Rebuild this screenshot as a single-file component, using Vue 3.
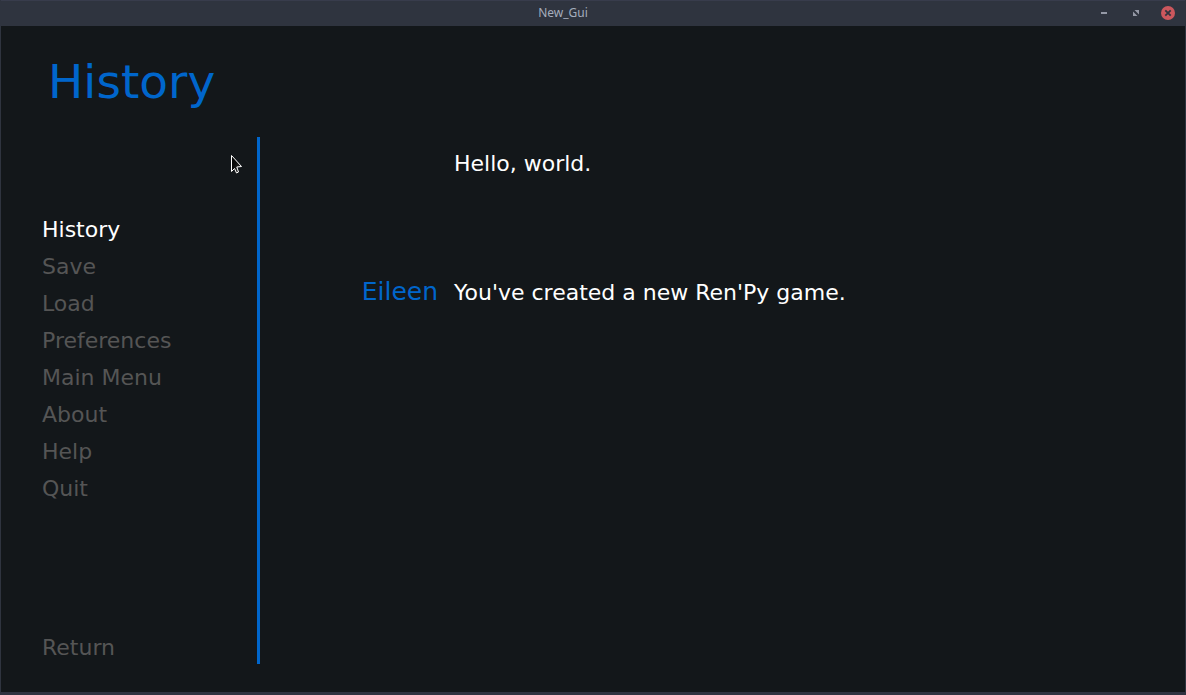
<script setup>
import { ref } from 'vue'

const items = ['History', 'Save', 'Load', 'Preferences', 'Main Menu', 'About', 'Help', 'Quit']
const current = ref('History')
const entries = [
  { who: '', what: 'Hello, world.' },
  { who: 'Eileen', what: "You've created a new Ren'Py game." },
]
</script>

<template>
  <div class="window">
    <header class="titlebar">
      <span class="caption">New_Gui</span>
      <div class="controls">
        <button class="control" type="button" aria-label="Minimize">
          <svg width="16" height="16" viewBox="0 0 16 16"><rect x="5" y="7" width="6" height="2" fill="#9599a6" /></svg>
        </button>
        <button class="control" type="button" aria-label="Maximize">
          <svg width="16" height="16" viewBox="0 0 16 16">
            <path d="M6.500 5H11v4.500zM5 6.500V11h4.500z" fill="#9599a6" />
          </svg>
        </button>
        <button class="control" type="button" aria-label="Close">
          <svg width="16" height="16" viewBox="0 0 16 16">
            <circle cx="8" cy="8" r="7" fill="#cc575d" />
            <path d="M5.300 5.300l5.400 5.400M10.700 5.300l-5.400 5.400" stroke="#2f343f" stroke-width="1.800" />
          </svg>
        </button>
      </div>
    </header>

    <div class="game">
      <h1 class="title">History</h1>
      <div class="body">
        <nav class="nav">
          <div class="menu">
            <button
              v-for="item in items"
              :key="item"
              type="button"
              class="link"
              :class="{ selected: item === current }"
              @click="current = item"
            >{{ item }}</button>
          </div>
          <button type="button" class="link return">Return</button>
        </nav>
        <main class="log">
          <div v-for="entry in entries" :key="entry.what" class="entry">
            <span class="who">{{ entry.who }}</span>
            <p class="what">{{ entry.what }}</p>
          </div>
        </main>
      </div>
    </div>

    <svg class="pointer" width="14" height="21" viewBox="0 0 14 21" aria-hidden="true">
      <defs>
        <linearGradient id="pointer-fill" x1="0" y1="0" x2="1" y2="1">
          <stop offset="0" stop-color="#000" />
          <stop offset="0.4" stop-color="#080808" />
          <stop offset="1" stop-color="#4a4a4a" />
        </linearGradient>
      </defs>
      <path
        d="M2.500 1.500V17.500L5.500 14.500L7.500 19L9.500 18L7.800 13L12.500 12.500Z"
        fill="url(#pointer-fill)" stroke="#fff" stroke-width="1" stroke-linejoin="round"
      />
    </svg>
  </div>
</template>

<style>
body {
  margin: 0;
  background: #13171a;
}
</style>

<style scoped>
.window {
  position: relative;
  box-sizing: border-box;
  display: flex;
  flex-direction: column;
  min-height: 100vh;
  border: 1px solid #2f343f;
  border-top: 0;
  border-bottom: 3px solid #2f3240;
  background: #13171a;
  font-family: "DejaVu Sans", sans-serif;
  font-size: 22px;
  line-height: 37px;
}
.titlebar {
  display: grid;
  grid-template-columns: 1fr auto 1fr;
  align-items: center;
  box-sizing: border-box;
  height: 26px;
  padding: 0 9px 1px;
  border-top: 1px solid #383c4c;
  background: #2f343f;
}
.caption {
  grid-column: 2;
  padding-right: 60px;
  font-family: "Noto Sans", sans-serif;
  font-size: 12px;
  line-height: 24px;
  color: #a5adbd;
}
.controls {
  display: flex;
  justify-content: flex-end;
  gap: 16px;
}
.control {
  display: flex;
  padding: 0;
  border: 0;
  background: none;
}
.game {
  flex: 1;
  display: flex;
  flex-direction: column;
  padding: 28px 41px;
}
.title {
  margin: 0 0 27px;
  padding-left: 6px;
  font-size: 47px;
  line-height: 56px;
  font-weight: 400;
  color: #0066cc;
}
.body {
  flex: 1;
  display: flex;
}
.nav {
  box-sizing: border-box;
  flex: 0 0 218px;
  display: flex;
  flex-direction: column;
  justify-content: space-between;
  padding-top: 74px;
  border-right: 3px solid #0066cc;
}
.menu {
  display: flex;
  flex-direction: column;
  align-items: flex-start;
}
.link {
  align-self: flex-start;
  padding: 0;
  border: 0;
  background: none;
  font: inherit;
  color: #555555;
  cursor: pointer;
}
.link.selected {
  color: #ffffff;
}
.link.return {
  line-height: 33px;
}
.log {
  flex: 1;
  padding-top: 8px;
}
.entry {
  display: grid;
  grid-template-columns: 178px 1fr;
  column-gap: 16px;
  align-items: baseline;
  min-height: 128px;
  color: #ffffff;
}
.who {
  text-align: right;
  font-size: 25px;
  color: #0066cc;
}
.what {
  margin: 0;
}
.pointer {
  position: absolute;
  left: 228px;
  top: 154px;
  pointer-events: none;
}
</style>
